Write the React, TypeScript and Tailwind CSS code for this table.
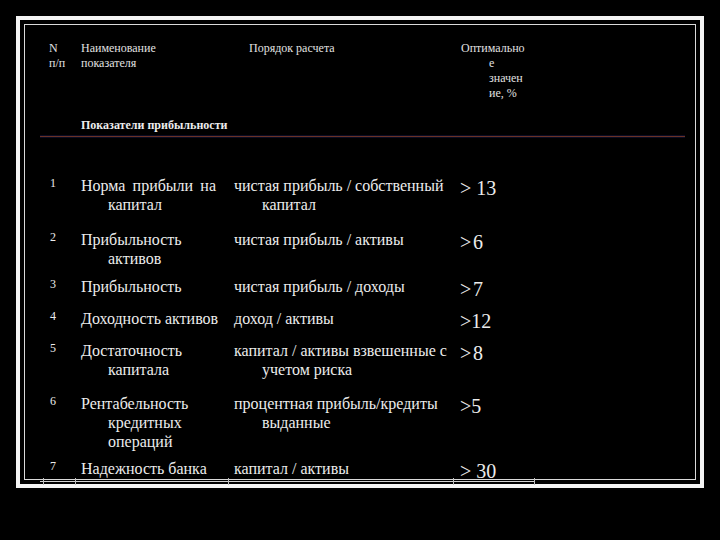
import React from "react";

interface Row {
  n: string;
  name: string[];
  spread?: boolean;
  calc: string[];
  value: string;
  height: string;
}

const rows: Row[] = [
  { n: "1", name: ["Норма прибыли на", "капитал"], spread: true, calc: ["чистая прибыль / собственный", "капитал"], value: "> 13", height: "h-[54px]" },
  { n: "2", name: ["Прибыльность", "активов"], calc: ["чистая прибыль / активы"], value: ">\u200A6", height: "h-[47px]" },
  { n: "3", name: ["Прибыльность"], calc: ["чистая прибыль / доходы"], value: ">\u200A7", height: "h-[32px]" },
  { n: "4", name: ["Доходность активов"], calc: ["доход / активы"], value: ">12", height: "h-[32px]" },
  { n: "5", name: ["Достаточность", "капитала"], calc: ["капитал / активы взвешенные с", "учетом риска"], value: ">\u200A8", height: "h-[53px]" },
  { n: "6", name: ["Рентабельность", "кредитных", "операций"], calc: ["процентная прибыль/кредиты", "выданные"], value: ">5", height: "h-[65px]" },
  { n: "7", name: ["Надежность банка"], calc: ["капитал / активы"], value: "> 30", height: "h-[19px]" },
];

function TableRow({ row }: { row: Row }) {
  return (
    <div className={`flex items-start pl-[25px] ${row.height}`}>
      <div className="w-[31px] -mt-[2px] text-[12px] leading-[19px]">{row.n}</div>
      <div className="w-[153px] text-[16px] leading-[19px]">
        {row.name.map((line, i) =>
          i === 0 ? (
            <div key={i} className={row.spread ? "w-[135px] text-justify [text-align-last:justify]" : ""}>
              {line}
            </div>
          ) : (
            <div key={i} className="pl-[27px]">
              {line}
            </div>
          )
        )}
      </div>
      <div className="w-[226px] text-[16px] leading-[19px]">
        {row.calc.map((line, i) => (
          <div key={i} className={i === 0 ? "" : "pl-[28px]"}>
            {line}
          </div>
        ))}
      </div>
      <div className="mt-[3px] text-[20px] leading-[19px]">{row.value}</div>
    </div>
  );
}

export default function App() {
  return (
    <div
      className="relative h-[540px] w-[720px] overflow-hidden bg-black pl-[16px] pt-[16px] text-[#ececec]"
      style={{ fontFamily: '"Liberation Serif", "Times New Roman", serif' }}
    >
      <div className="h-[472px] w-[688px] border-[4px] border-[#f4f4f4] p-[4px]">
        <div className="h-full w-full border border-[#dadada]">
          {/* header */}
          <div className="mt-[16px] flex pl-[24px] text-[12px] leading-[15px] text-[#e0e0e0]">
            <div className="w-[32px]">
              <div>N</div>
              <div>п/п</div>
            </div>
            <div className="w-[168px]">
              <div>Наименование</div>
              <div>показателя</div>
            </div>
            <div className="w-[212px]">Порядок расчета</div>
            <div>
              <div>Оптимально</div>
              <div className="pl-[28px]">е</div>
              <div className="pl-[28px]">значен</div>
              <div className="pl-[28px]">ие, %</div>
            </div>
          </div>

          <div className="ml-[56px] mt-[17px] text-[12px] font-bold leading-[15px]">Показатели прибыльности</div>
          <div className="ml-[15px] mt-[3px] h-px w-[645px] bg-[#6a3226] shadow-[0_-1px_0_#0b0b22,0_1px_0_#0b0b22]" />

          <div className="mt-[39px]">
            {rows.map((row) => (
              <TableRow key={row.n} row={row} />
            ))}
          </div>
        </div>
      </div>

      {/* bottom border of the table lying over the frame */}
      <div className="absolute left-[40px] top-[481px] h-px w-[495px] bg-[#d0d0d0]" />
      <div className="absolute left-[43px] top-[478px] h-[7px] w-px bg-[#bdbdbd]" />
      <div className="absolute left-[75px] top-[478px] h-[7px] w-px bg-[#bdbdbd]" />
      <div className="absolute left-[228px] top-[478px] h-[7px] w-px bg-[#bdbdbd]" />
      <div className="absolute left-[453px] top-[478px] h-[7px] w-px bg-[#bdbdbd]" />
      <div className="absolute left-[534px] top-[478px] h-[7px] w-px bg-[#bdbdbd]" />
    </div>
  );
}
